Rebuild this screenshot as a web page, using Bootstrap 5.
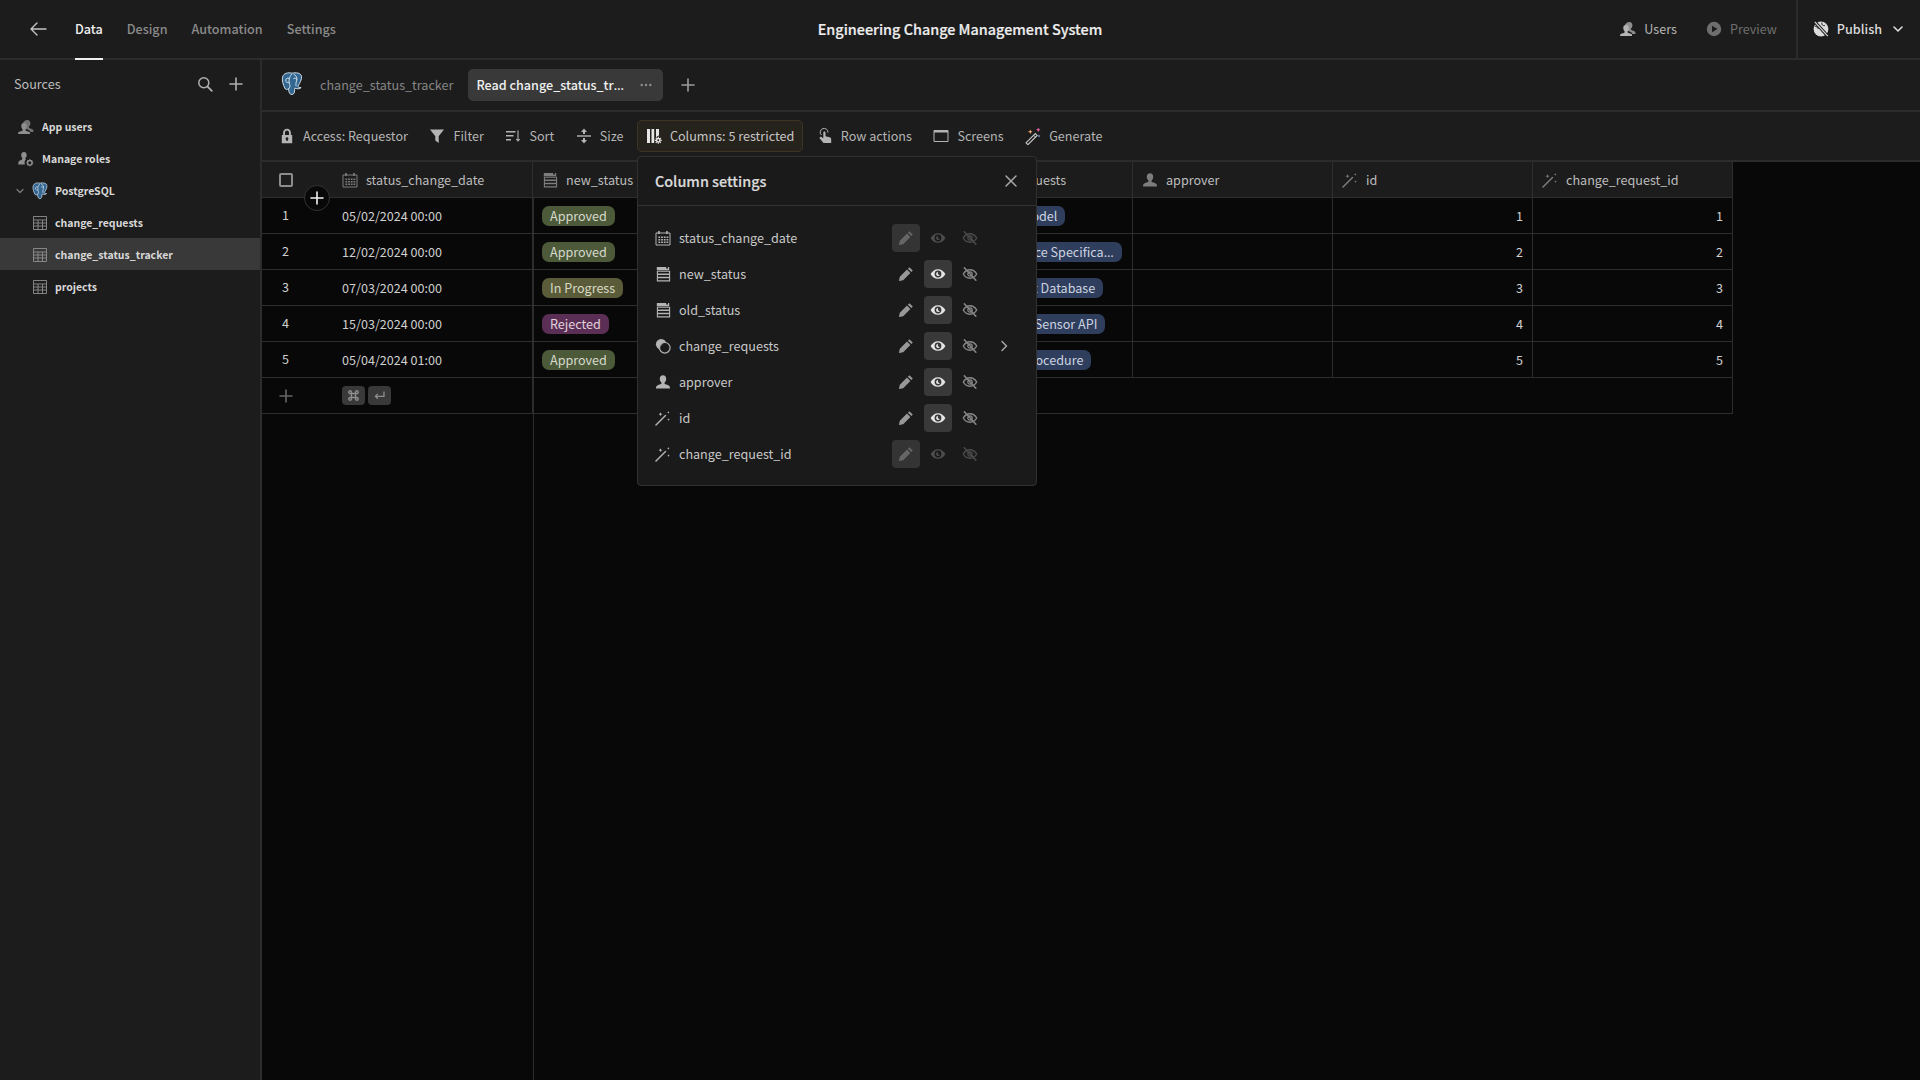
<!DOCTYPE html>
<html lang="en" data-bs-theme="dark">
<head>
<meta charset="utf-8">
<title>Engineering Change Management System</title>
<link href="https://cdn.jsdelivr.net/npm/bootstrap@5.3.0/dist/css/bootstrap.min.css" rel="stylesheet">
<style>
:root{--g50:#080808;--g100:#1c1c1c;--g200:#2c2c2c;--g300:#393939;--tx:#c8c8c8;--dim:#8a8a8a}
html,body{height:100%}
body{background:var(--g100);color:var(--tx);font-family:"Noto Sans CJK SC","Noto Sans",sans-serif;font-size:12.6px;line-height:20px;overflow:hidden}
svg.ic{width:16px;height:16px;flex:none;display:block;fill:currentColor}
.ell{font-family:"Noto Sans",sans-serif}
.topbar{height:60px;border-bottom:2px solid var(--g200);flex:none}
.top-side{flex:1 1 0;height:58px;min-width:0}
.back-link{color:#c4c4c4;margin:0 27px 0 28px;width:20px;height:20px}
.back-link svg.ic{width:20px;height:20px}
.top-tab{height:60px;line-height:58px;font-weight:500;color:var(--dim);margin:0 24px -2px 0;padding:0;border-bottom:2px solid transparent}
.top-tab.on{color:#f0f0f0;border-bottom-color:#f0f0f0}
.app-title{font-size:14.4px;font-weight:500;color:#ededed;white-space:nowrap;-webkit-text-stroke:.2px currentColor}
.top-act{color:#b4b4b4;gap:8px;margin-right:29px}
.top-act.off{color:#6e6e6e;margin-right:19px}
.publish-box{border-left:2px solid var(--g200);height:58px;padding-left:15px;padding-right:14px;color:#dcdcdc;gap:8px;font-weight:500}
.body-row{min-height:0}
.side{width:262px;flex:none;border-right:2px solid var(--g200)}
.side-head{height:48px;padding:0 16px 0 14px;color:#bdbdbd}
.side-head svg{color:#b0b0b0}
.side-tools{gap:15px}
.side-list{padding-top:2px}
.side-row{height:32px;padding-top:2px;font-size:10.5px;font-weight:700;color:#d8d8d8;gap:8px;padding-left:18px}
.side-row .gr{color:#8e8e8e}
.side-row.db{padding-left:14px;gap:0}
.side-row.db svg.chev-s{width:12px;height:12px;margin-right:6px;color:#7c7c7c}
.side-row.db .logo-s{width:16px;height:20px;margin-right:7px}
.side-row.tb{padding-left:32px;gap:7px}
.side-row.sel{background:var(--g300)}
.main-col{min-width:0}
.tabbar{height:52px;border-bottom:2px solid var(--g200);padding-left:19px;flex:none}
.tabbar .logo-b{width:22px;height:24px;margin-right:17px;margin-top:-3px}
.plain-tab{color:#868686;margin-right:15px}
.read-tab{background:var(--g300);height:32px;width:195px;border-radius:5px;padding:0 8px;color:#f0f0f0;font-weight:500;margin-right:17px}
.read-tab .nm{white-space:nowrap}
.read-tab svg.dots{color:#8f8f8f;margin-left:auto;margin-right:3px;width:12px;height:12px}
.tab-add{color:#9c9c9c}
.toolbar{height:50px;border-bottom:2px solid var(--g200);padding-left:9px;gap:5.5px;flex:none}
.tool{height:32px;padding:0 8px;gap:8px;color:#b4b4b4;white-space:nowrap}
.tool svg{color:#b4b4b4}
.tool svg.ic.gen-ic{width:18px;height:18px;margin:0 -1px}
.tool-wrap{position:relative}
.tool.active{background:#26221c;border:1px solid #3e3524;border-radius:5px;color:#c6c6c6}
.tool.active svg{color:#e6e6e6}
.grid-wrap{flex:1 1 auto;background:linear-gradient(var(--g200),var(--g200)) 271px 0/1px 100% no-repeat var(--g50);min-height:0;overflow:hidden}
table.dtable{table-layout:fixed;width:1471px;border-collapse:separate;border-spacing:0;margin:0;--bs-table-bg:transparent;--bs-table-color:#cfcfcf;--bs-table-border-color:var(--g200)}
table.dtable>*>tr>*{height:36px;padding:0 9px;border:0;border-bottom:1px solid #2e2e2e;vertical-align:middle;box-shadow:none;white-space:nowrap;overflow:hidden;font-weight:400;color:#cfcfcf}
table.dtable>thead>tr>th{background:var(--g100);color:#bcbcbc}
table.dtable>*>tr>*.br{border-right:1px solid #2e2e2e}
table.dtable>*>tr>*.nc{width:71px;padding-left:16px;overflow:visible;position:relative}
.th-in{gap:8px}
.th-in svg{color:#7d7d7d}
.chk-box{width:14px;height:14px;border:2px solid #8c8c8c;border-radius:2px;margin-left:1px}
.num-c{width:15px;text-align:center;margin-top:-2px}
.add-circle{position:absolute;left:42px;top:23px;width:26px;height:26px;border-radius:50%;background:var(--g50);border:1px solid #333;color:#f2f2f2;z-index:2;padding:0}
.pill{display:inline-block;height:20px;line-height:20px;padding:0 8px;border-radius:7px;white-space:nowrap;vertical-align:middle;color:#d6d8cc}
.p-green{background:#4c5a3a}
.p-olive{background:#5a5c39;color:#d8d8c4}
.p-plum{background:#5b2f55;color:#e0cfdc}
.p-blue{background:#2f3e5c;color:#ccd3e0}
.chip{height:19px;border-radius:4px;background:var(--g300);color:#8e8e8e;padding:0 5px;display:inline-flex;align-items:center}
.chip svg.ic{width:13px;height:13px}
.add-plus{color:#666}
.chips{gap:3px}
.col-pop{position:absolute;left:0;top:36px;width:400px;height:330px;background:#1a1a1a;border:1px solid #303030;border-radius:4px;z-index:5;--bs-card-bg:#1a1a1a;--bs-card-color:#cfcfcf}
.col-pop .pop-head{height:49px;border-bottom:1px solid #333;padding:0 18px 0 17px;flex:none}
.pop-title{font-size:14.4px;font-weight:500;color:#dadada;-webkit-text-stroke:.2px currentColor}
.pop-x{color:#a8a8a8;background:none;border:0;padding:0;margin-right:-1px;margin-top:-1px}
.pop-list{padding:14px 24px 12px 17px}
.pop-row{height:36px;color:#c8c8c8}
.pop-row>svg.lead{color:#b4b4b4;margin-right:8px}
.pop-name{flex:1 1 auto;min-width:0}
.acts{gap:4px}
.act-b{width:28px;height:28px;border-radius:4px;background:none;border:0;padding:0;color:#989898;display:flex;align-items:center;justify-content:center}
.act-b.on{background:var(--g300);color:#e4e4e4}
.act-b.off-b{color:#8a8a8a}
.act-b.dis{color:#4c4c4c}
.act-b.dis.on{background:#343434;color:#666}
.slot{width:28px;color:#a6a6a6}
</style>
</head>
<body class="d-flex flex-column">
<svg width="0" height="0" class="position-absolute" aria-hidden="true">
<defs>
<symbol id="i-back" viewBox="0 0 20 20"><path d="M18 10H3M9 4l-6 6 6 6" fill="none" stroke="currentColor" stroke-width="1.4" stroke-linecap="round" stroke-linejoin="round"/></symbol>
<symbol id="i-search" viewBox="0 0 16 16"><circle cx="6.800" cy="6.800" r="5" fill="none" stroke="currentColor" stroke-width="1.500"/><path d="M10.600 10.600l4.200 4.200" stroke="currentColor" stroke-width="1.800" stroke-linecap="round"/></symbol>
<symbol id="i-plus" viewBox="0 0 16 16"><path d="M8 2v12M2 8h12" stroke="currentColor" stroke-width="1.600" stroke-linecap="round"/></symbol>
<symbol id="i-chevd" viewBox="0 0 16 16"><path d="M4 6l4 4 4-4" fill="none" stroke="currentColor" stroke-width="1.600" stroke-linecap="round" stroke-linejoin="round"/></symbol>
<symbol id="i-chevr" viewBox="0 0 16 16"><path d="M6 3.500l4.500 4.500L6 12.500" fill="none" stroke="currentColor" stroke-width="1.500" stroke-linecap="round" stroke-linejoin="round"/></symbol>
<symbol id="i-x" viewBox="0 0 16 16"><path d="M3 3l10 10M13 3L3 13" stroke="currentColor" stroke-width="1.500" stroke-linecap="round"/></symbol>
<symbol id="i-user" viewBox="0 0 16 16"><path d="M8 1.200c2 0 3.200 1.500 3.200 3.500 0 1.600-.7 3-1.600 3.700v1.400c0 .5 3.200 1 4.500 2 .7.500.9 1.300.9 2.700H1c0-1.400.2-2.200.9-2.700 1.300-1 4.500-1.500 4.500-2V8.400c-.9-.7-1.600-2.100-1.600-3.700 0-2 1.200-3.500 3.200-3.500z"/></symbol>
<symbol id="i-users" viewBox="0 0 16 16"><path d="M9.500 1c1.800 0 2.900 1.400 2.900 3.200 0 1.500-.6 2.700-1.400 3.300v1.200c0 .5 2.700.9 3.800 1.800.6.400.7 1.200.7 2.500h-3.200c-.2-1-.8-1.700-2-2.300L6.500 9.400V7.500C5.700 6.900 5.100 5.700 5.100 4.200 5.100 2.400 7.700 1 9.500 1z" opacity=".75"/><path d="M6 4c1.800 0 2.900 1.300 2.900 3 0 1.400-.6 2.600-1.300 3.200v1.200c0 .4 2.700.8 3.800 1.600.6.400.7.800.7 1.900H.1c0-1.100.1-1.500.7-1.900 1.100-.8 3.800-1.200 3.800-1.600v-1.200C3.900 9.600 3.300 8.400 3.300 7 3.100 5.300 4.200 4 6 4z"/></symbol>
<symbol id="i-roles" viewBox="0 0 16 16"><path d="M6 1c1.700 0 2.700 1.300 2.700 3 0 1.400-.6 2.500-1.300 3v1.100l.6.2c-.9.900-1.400 2-1.400 3.300 0 .6.100 1.200.3 1.800H.3c0-2.200.2-2.800.8-3.300 1-.8 3.200-1 3.200-2V7C3.700 6.500 3.200 5.400 3.200 4 3.200 2.300 4.300 1 6 1z"/><circle cx="11.800" cy="11.800" r="2.300" fill="none" stroke="currentColor" stroke-width="1.400"/><path d="M11.800 8.300v1.300M11.800 14v1.300M8.300 11.800h1.300M14 11.800h1.300M9.400 9.400l.8.8M13.400 13.400l.8.8M14.200 9.400l-.8.8M10.200 13.400l-.8.8" stroke="currentColor" stroke-width="1.100"/></symbol>
<symbol id="i-pg" viewBox="0 0 22 24"><path d="M11 1.200C7 .2 2.400 1.200 1.500 5.200.8 8.600 2.300 13 3.700 16c.9 2 2.500 1.800 3.800.6.300 1.400.1 4.800 2.300 5.700 2 .8 3.700-.6 3.800-3.300 0-1.200-.1-2.300.3-2.800 2.600 1 5.300.7 6.200-.7-1.800.2-3-.2-3.200-1.400 1.800-2.800 4.200-6.800 3.600-9.800C19.800.7 14.800.3 11 1.200z" fill="#336791" stroke="#dfeaf2" stroke-width=".9"/><path d="M10.500 2.500C8 5 7.500 9 8.700 12.500c.5 1.500.2 3-.7 4M13 2.300c2.600 1.300 3.300 4 2.600 6.500-.6 2-.9 3.200-.6 5M7.500 6.200c-1.700-.4-3 .6-2.700 2.600.2 1.300 1.300 2 2.600 1.800M12.700 6.500c1.200-.6 2.600-.2 2.900.7" fill="none" stroke="#e4eef5" stroke-width=".9" stroke-linecap="round"/></symbol>
<symbol id="i-table" viewBox="0 0 16 16"><path d="M1.500 1.500h13v13h-13zM1.500 5h13M1.500 8h13M1.500 11h13M6 5v9.500M10.500 5v9.500" fill="none" stroke="currentColor" stroke-width=".9"/></symbol>
<symbol id="i-cal" viewBox="0 0 16 16"><path d="M1 3h14v12H1z" fill="none" stroke="currentColor" stroke-width="1"/><path d="M4 1v3M12 1v3" stroke="currentColor" stroke-width="1.600"/><path d="M3.400 6.500h1.800v1.600H3.400zM6.100 6.500h1.800v1.600H6.100zM8.800 6.500h1.800v1.600H8.800zM11.500 6.500h1.800v1.600h-1.800zM3.400 9h1.800v1.600H3.400zM6.100 9h1.800v1.600H6.100zM8.800 9h1.800v1.600H8.800zM11.500 9h1.800v1.600h-1.800zM3.400 11.500h1.800v1.600H3.400zM6.100 11.500h1.800v1.600H6.100zM8.800 11.500h1.800v1.600H8.800zM11.500 11.500h1.800v1.600h-1.800z"/></symbol>
<symbol id="i-text" viewBox="0 0 16 16"><path d="M1.800 1h9.400v1.600h1.800V1h1.200v3.200H1.800z"/><path d="M2.400 5.300h12.200v9.600H2.400z" fill="none" stroke="currentColor" stroke-width="1.100"/><path d="M2 7.400h13v1.500H2zM2 10.800h13v1.500H2z"/></symbol>
<symbol id="i-rel" viewBox="0 0 16 16"><circle cx="6.200" cy="6.200" r="5.300"/><circle cx="9.800" cy="9.800" r="5.300" fill="#1a1a1a" stroke="currentColor" stroke-width="1.200"/><path d="M5.500 9.200a4.200 4.200 0 0 1 3.700-3.800 5 5 0 0 0-3.700 3.800z"/></symbol>
<symbol id="i-wand" viewBox="0 0 16 16"><path d="M1 15L10.500 5.500" stroke="currentColor" stroke-width="1.500" stroke-linecap="round"/><path d="M5.500 2.200l.6 1.400 1.400.6-1.400.6-.6 1.400-.6-1.400-1.400-.6 1.400-.6zM13.300 1l.4 1 1 .4-1 .4-.4 1-.4-1-1-.4 1-.4zM13.500 8.200l.4 1 1 .4-1 .4-.4 1-.4-1-1-.4 1-.4z"/></symbol>
<symbol id="i-pen" viewBox="0 0 16 16"><path d="M11.400 1.200l3.400 3.400-1.500 1.500-3.400-3.400zM9 3.600l3.400 3.400-7.200 7.200-3.900.9-.4-.4.900-3.900z"/></symbol>
<symbol id="i-eye" viewBox="0 0 16 16"><path d="M8 3.200C4.700 3.200 2 5.300.6 8c1.400 2.700 4.100 4.800 7.400 4.800s6-2.100 7.400-4.800C14 5.300 11.300 3.200 8 3.200zm0 8.200a3.400 3.400 0 1 1 0-6.800 3.400 3.400 0 0 1 0 6.800zm0-5.300a1.900 1.900 0 1 0 0 3.800h1.900L8 8z" fill-rule="evenodd"/></symbol>
<symbol id="i-eyeoff" viewBox="0 0 16 16"><path d="M8 3.800C5 3.800 2.700 5.600 1.300 8c1.400 2.400 3.700 4.200 6.700 4.200S13.300 10.400 14.700 8C13.300 5.600 11 3.800 8 3.800z" fill="none" stroke="currentColor" stroke-width="1.400"/><circle cx="8" cy="8" r="2.200" fill="none" stroke="currentColor" stroke-width="1.200"/><path d="M2.300 1.800l11.600 12.400" stroke="currentColor" stroke-width="1.500" stroke-linecap="round"/></symbol>
<symbol id="i-lock" viewBox="0 0 16 16"><path d="M8 .8c2.400 0 3.900 1.700 3.900 4V7h1.300v8.200H2.800V7h1.300V4.800C4.100 2.500 5.600.8 8 .8zm0 1.800C6.700 2.600 6 3.500 6 4.900V7h4V4.900c0-1.400-.7-2.300-2-2.300zm0 6.700a1.400 1.400 0 0 0-.7 2.600V13h1.400v-1.100A1.400 1.400 0 0 0 8 9.300z" fill-rule="evenodd"/></symbol>
<symbol id="i-filter" viewBox="0 0 16 16"><path d="M1 1.500h14L9.700 8.200v6.900L6.300 12.500V8.200z"/></symbol>
<symbol id="i-sort" viewBox="0 0 16 16"><path d="M1 3h9.500v1.400H1zM1 7h7.500v1.400H1zM1 11h5v1.400H1z"/><path d="M13 2.500v10M11.200 11l1.800 2 1.800-2" fill="none" stroke="currentColor" stroke-width="1.100"/></symbol>
<symbol id="i-size" viewBox="0 0 16 16"><path d="M1 7.300h14v1.400H1z"/><path d="M8 .5L11 4H9v2H7V4H5zM8 15.500L5 12h2v-2h2v2h2z"/></symbol>
<symbol id="i-cols" viewBox="0 0 16 16"><path d="M1 1h3v14H1zM5.500 1h2.700v14H5.500zM10 1h3v6.500a5 5 0 0 0-3 2.200z"/><circle cx="12.300" cy="12.300" r="1.700" fill="none" stroke="currentColor" stroke-width="1.500"/><path d="M12.300 8.800v1.400M12.300 14.400v1.400M8.800 12.300h1.400M14.400 12.300h1.400M9.800 9.800l1 1M13.800 13.800l1 1M14.800 9.800l-1 1M10.800 13.800l-1 1" stroke="currentColor" stroke-width="1.200"/></symbol>
<symbol id="i-hand" viewBox="0 0 16 16"><path d="M4.300 7a3.900 3.900 0 1 1 6.700-2.400" fill="none" stroke="currentColor" stroke-width="1"/><path d="M6.300 4.500c0-1.500 2.200-1.500 2.200 0v3.700l4 1c1.200.3 1.700 1 1.700 2v3.800H6.500L2.800 10.500c-.7-1 .5-2.300 1.700-1.500l1.800 1.300z"/></symbol>
<symbol id="i-screen" viewBox="0 0 16 16"><path d="M1 2.500h14v11H1z" fill="none" stroke="currentColor" stroke-width="1"/><path d="M1 2.500h14v2H1z"/></symbol>
<symbol id="i-gen" viewBox="0 0 18 18"><path d="M2 15.800L11.300 6.500l1.900 1.900-9.300 9.300z" fill="none" stroke="#c9c9c9" stroke-width="1.100"/><path d="M9.600 8.200l1.900 1.900" stroke="#c9c9c9" stroke-width="1"/><path d="M6.300 2.500l.7 1.600 1.600.7-1.600.7-.7 1.600-.7-1.600L4 4.800l1.600-.7z" fill="#f0a56d"/><path d="M14.300.5l.7 1.600 1.600.7-1.600.7-.7 1.600-.7-1.600-1.600-.7 1.600-.7z" fill="#e25fa0"/><path d="M15 7.500l.4 1.100 1.100.4-1.100.4-.4 1.100-.4-1.100-1.100-.4 1.100-.4z" fill="#8aa7ee"/></symbol>
<symbol id="i-play" viewBox="0 0 16 16"><path d="M8 .8a7.200 7.200 0 1 0 0 14.400A7.200 7.200 0 0 0 8 .8zM6 4.800L11.500 8 6 11.200z" fill-rule="evenodd"/></symbol>
<symbol id="i-pub" viewBox="0 0 16 16"><circle cx="8" cy="8" r="7.400"/><path d="M1.800 5c2 .5 3 1.500 3.500 3M9 1.500C8 3.500 10 5 12 4.500M10.500 10c1.500.5 2.500 2 2 4" fill="none" stroke="#1c1c1c" stroke-width="1"/><path d="M1.800 .8l13 14.400" stroke="#1c1c1c" stroke-width="3.200"/><path d="M1.800 .8l13 14.400" stroke="currentColor" stroke-width="1.200"/></symbol>
<symbol id="i-cmd" viewBox="0 0 16 16"><path d="M5.500 5.500h5v5h-5zM5.500 5.500H4A1.700 1.700 0 1 1 5.500 4zM10.500 5.500V4A1.700 1.700 0 1 1 12 5.500zM10.500 10.500H12A1.700 1.700 0 1 1 10.500 12zM5.500 10.500V12A1.700 1.700 0 1 1 4 10.500z" fill="none" stroke="currentColor" stroke-width="1.700"/></symbol>
<symbol id="i-enter" viewBox="0 0 16 16"><path d="M13.500 3v6H3M6 6L3 9l3 3" fill="none" stroke="currentColor" stroke-width="1.600"/></symbol>
<symbol id="i-dots" viewBox="0 0 12 12"><circle cx="1.700" cy="6" r="1.200"/><circle cx="6" cy="6" r="1.200"/><circle cx="10.300" cy="6" r="1.200"/></symbol>
</defs>
</svg>

<header class="topbar d-flex align-items-start">
  <div class="top-side d-flex align-items-center">
    <a class="back-link d-block" href="#"><svg class="ic"><use href="#i-back"/></svg></a>
    <nav class="nav">
      <a class="top-tab on text-decoration-none" href="#">Data</a>
      <a class="top-tab text-decoration-none" href="#">Design</a>
      <a class="top-tab text-decoration-none" href="#">Automation</a>
      <a class="top-tab text-decoration-none" href="#">Settings</a>
    </nav>
  </div>
  <div class="app-title align-self-center">Engineering Change Management System</div>
  <div class="top-side d-flex align-items-center justify-content-end">
    <div class="top-act d-flex align-items-center"><svg class="ic"><use href="#i-users"/></svg>Users</div>
    <div class="top-act off d-flex align-items-center"><svg class="ic"><use href="#i-play"/></svg>Preview</div>
    <div class="publish-box d-flex align-items-center"><svg class="ic"><use href="#i-pub"/></svg>Publish<svg class="ic"><use href="#i-chevd"/></svg></div>
  </div>
</header>

<div class="body-row d-flex flex-grow-1">
  <aside class="side">
    <div class="side-head d-flex align-items-center justify-content-between">
      <span>Sources</span>
      <span class="side-tools d-flex"><svg class="ic"><use href="#i-search"/></svg><svg class="ic"><use href="#i-plus"/></svg></span>
    </div>
    <div class="side-list">
      <div class="side-row d-flex align-items-center"><svg class="ic gr"><use href="#i-users"/></svg>App users</div>
      <div class="side-row d-flex align-items-center"><svg class="ic gr"><use href="#i-roles"/></svg>Manage roles</div>
      <div class="side-row db d-flex align-items-center"><svg class="ic chev-s"><use href="#i-chevd"/></svg><svg class="logo-s"><use href="#i-pg"/></svg>PostgreSQL</div>
      <div class="side-row tb d-flex align-items-center"><svg class="ic gr"><use href="#i-table"/></svg>change_requests</div>
      <div class="side-row tb sel d-flex align-items-center"><svg class="ic gr"><use href="#i-table"/></svg>change_status_tracker</div>
      <div class="side-row tb d-flex align-items-center"><svg class="ic gr"><use href="#i-table"/></svg>projects</div>
    </div>
  </aside>

  <main class="main-col d-flex flex-column flex-grow-1">
    <div class="tabbar d-flex align-items-center">
      <svg class="logo-b"><use href="#i-pg"/></svg>
      <span class="plain-tab">change_status_tracker</span>
      <div class="read-tab d-flex align-items-center"><span class="nm">Read change_status_tr<span class="ell">…</span></span><svg class="ic dots"><use href="#i-dots"/></svg></div>
      <svg class="ic tab-add"><use href="#i-plus"/></svg>
    </div>
    <div class="toolbar d-flex align-items-center">
      <div class="tool d-flex align-items-center"><svg class="ic"><use href="#i-lock"/></svg>Access: Requestor</div>
      <div class="tool d-flex align-items-center"><svg class="ic"><use href="#i-filter"/></svg>Filter</div>
      <div class="tool d-flex align-items-center"><svg class="ic"><use href="#i-sort"/></svg>Sort</div>
      <div class="tool d-flex align-items-center"><svg class="ic"><use href="#i-size"/></svg>Size</div>
      <div class="tool-wrap">
        <div class="tool active d-flex align-items-center"><svg class="ic"><use href="#i-cols"/></svg>Columns: 5 restricted</div>
        <div class="card col-pop d-flex flex-column">
          <div class="pop-head d-flex align-items-center justify-content-between"><span class="pop-title">Column settings</span><button class="pop-x" type="button" aria-label="Close"><svg class="ic"><use href="#i-x"/></svg></button></div>
          <div class="pop-list">
            <div class="pop-row d-flex align-items-center"><svg class="ic lead"><use href="#i-cal"/></svg><span class="pop-name">status_change_date</span><div class="acts d-flex"><button class="act-b dis on"><svg class="ic"><use href="#i-pen"/></svg></button><button class="act-b dis"><svg class="ic"><use href="#i-eye"/></svg></button><button class="act-b dis"><svg class="ic"><use href="#i-eyeoff"/></svg></button></div><span class="slot"></span></div>
            <div class="pop-row d-flex align-items-center"><svg class="ic lead"><use href="#i-text"/></svg><span class="pop-name">new_status</span><div class="acts d-flex"><button class="act-b"><svg class="ic"><use href="#i-pen"/></svg></button><button class="act-b on"><svg class="ic"><use href="#i-eye"/></svg></button><button class="act-b off-b"><svg class="ic"><use href="#i-eyeoff"/></svg></button></div><span class="slot"></span></div>
            <div class="pop-row d-flex align-items-center"><svg class="ic lead"><use href="#i-text"/></svg><span class="pop-name">old_status</span><div class="acts d-flex"><button class="act-b"><svg class="ic"><use href="#i-pen"/></svg></button><button class="act-b on"><svg class="ic"><use href="#i-eye"/></svg></button><button class="act-b off-b"><svg class="ic"><use href="#i-eyeoff"/></svg></button></div><span class="slot"></span></div>
            <div class="pop-row d-flex align-items-center"><svg class="ic lead"><use href="#i-rel"/></svg><span class="pop-name">change_requests</span><div class="acts d-flex"><button class="act-b"><svg class="ic"><use href="#i-pen"/></svg></button><button class="act-b on"><svg class="ic"><use href="#i-eye"/></svg></button><button class="act-b off-b"><svg class="ic"><use href="#i-eyeoff"/></svg></button></div><span class="slot d-flex justify-content-end"><svg class="ic"><use href="#i-chevr"/></svg></span></div>
            <div class="pop-row d-flex align-items-center"><svg class="ic lead"><use href="#i-user"/></svg><span class="pop-name">approver</span><div class="acts d-flex"><button class="act-b"><svg class="ic"><use href="#i-pen"/></svg></button><button class="act-b on"><svg class="ic"><use href="#i-eye"/></svg></button><button class="act-b off-b"><svg class="ic"><use href="#i-eyeoff"/></svg></button></div><span class="slot"></span></div>
            <div class="pop-row d-flex align-items-center"><svg class="ic lead"><use href="#i-wand"/></svg><span class="pop-name">id</span><div class="acts d-flex"><button class="act-b"><svg class="ic"><use href="#i-pen"/></svg></button><button class="act-b on"><svg class="ic"><use href="#i-eye"/></svg></button><button class="act-b off-b"><svg class="ic"><use href="#i-eyeoff"/></svg></button></div><span class="slot"></span></div>
            <div class="pop-row d-flex align-items-center"><svg class="ic lead"><use href="#i-wand"/></svg><span class="pop-name">change_request_id</span><div class="acts d-flex"><button class="act-b dis on"><svg class="ic"><use href="#i-pen"/></svg></button><button class="act-b dis"><svg class="ic"><use href="#i-eye"/></svg></button><button class="act-b dis"><svg class="ic"><use href="#i-eyeoff"/></svg></button></div><span class="slot"></span></div>
          </div>
        </div>
      </div>
      <div class="tool d-flex align-items-center"><svg class="ic"><use href="#i-hand"/></svg>Row actions</div>
      <div class="tool d-flex align-items-center"><svg class="ic"><use href="#i-screen"/></svg>Screens</div>
      <div class="tool d-flex align-items-center"><svg class="ic gen-ic"><use href="#i-gen"/></svg>Generate</div>
    </div>
    <div class="grid-wrap">
      <table class="table dtable">
        <thead><tr>
          <th class="nc"><div class="chk-box"></div><button class="add-circle d-flex align-items-center justify-content-center" type="button" aria-label="Add"><svg class="ic"><use href="#i-plus"/></svg></button></th>
          <th class="br"><div class="th-in d-flex align-items-center"><svg class="ic"><use href="#i-cal"/></svg>status_change_date</div></th>
          <th class="br"><div class="th-in d-flex align-items-center"><svg class="ic"><use href="#i-text"/></svg>new_status</div></th>
          <th class="br"><div class="th-in d-flex align-items-center"><svg class="ic"><use href="#i-text"/></svg>old_status</div></th>
          <th class="br"><div class="th-in d-flex align-items-center"><svg class="ic"><use href="#i-rel"/></svg>change_requests</div></th>
          <th class="br"><div class="th-in d-flex align-items-center"><svg class="ic"><use href="#i-user"/></svg>approver</div></th>
          <th class="br"><div class="th-in d-flex align-items-center"><svg class="ic"><use href="#i-wand"/></svg>id</div></th>
          <th class="br"><div class="th-in d-flex align-items-center"><svg class="ic"><use href="#i-wand"/></svg>change_request_id</div></th>
        </tr></thead>
        <tbody>
          <tr><td class="nc"><div class="num-c">1</div></td><td class="br">05/02/2024 00:00</td><td class="br"><span class="pill p-green">Approved</span></td><td class="br"><span class="pill p-olive">Submitted</span></td><td class="br"><span class="pill p-blue">Structural X Model</span></td><td class="br"></td><td class="br text-end">1</td><td class="br text-end">1</td></tr>
          <tr><td class="nc"><div class="num-c">2</div></td><td class="br">12/02/2024 00:00</td><td class="br"><span class="pill p-green">Approved</span></td><td class="br"><span class="pill p-olive">In Progress</span></td><td class="br"><span class="pill p-blue">Update Interface Specifica<span class="ell">…</span></span></td><td class="br"></td><td class="br text-end">2</td><td class="br text-end">2</td></tr>
          <tr><td class="nc"><div class="num-c">3</div></td><td class="br">07/03/2024 00:00</td><td class="br"><span class="pill p-olive">In Progress</span></td><td class="br"><span class="pill p-olive">Submitted</span></td><td class="br"><span class="pill p-blue">Update Project Database</span></td><td class="br"></td><td class="br text-end">3</td><td class="br text-end">3</td></tr>
          <tr><td class="nc"><div class="num-c">4</div></td><td class="br">15/03/2024 00:00</td><td class="br"><span class="pill p-plum">Rejected</span></td><td class="br"><span class="pill p-olive">In Progress</span></td><td class="br"><span class="pill p-blue">Replace Older Sensor API</span></td><td class="br"></td><td class="br text-end">4</td><td class="br text-end">4</td></tr>
          <tr><td class="nc"><div class="num-c">5</div></td><td class="br">05/04/2024 01:00</td><td class="br"><span class="pill p-green">Approved</span></td><td class="br"><span class="pill p-olive">Submitted</span></td><td class="br"><span class="pill p-blue">Update Test Procedure</span></td><td class="br"></td><td class="br text-end">5</td><td class="br text-end">5</td></tr>
          <tr><td class="nc"><svg class="ic add-plus"><use href="#i-plus"/></svg></td><td class="br"><div class="chips d-flex"><span class="chip"><svg class="ic"><use href="#i-cmd"/></svg></span><span class="chip"><svg class="ic"><use href="#i-enter"/></svg></span></div></td><td class="br" colspan="6"></td></tr>
        </tbody>
      </table>
    </div>
  </main>
</div>
<script src="https://cdn.jsdelivr.net/npm/bootstrap@5.3.0/dist/js/bootstrap.bundle.min.js"></script>
</body>
</html>
